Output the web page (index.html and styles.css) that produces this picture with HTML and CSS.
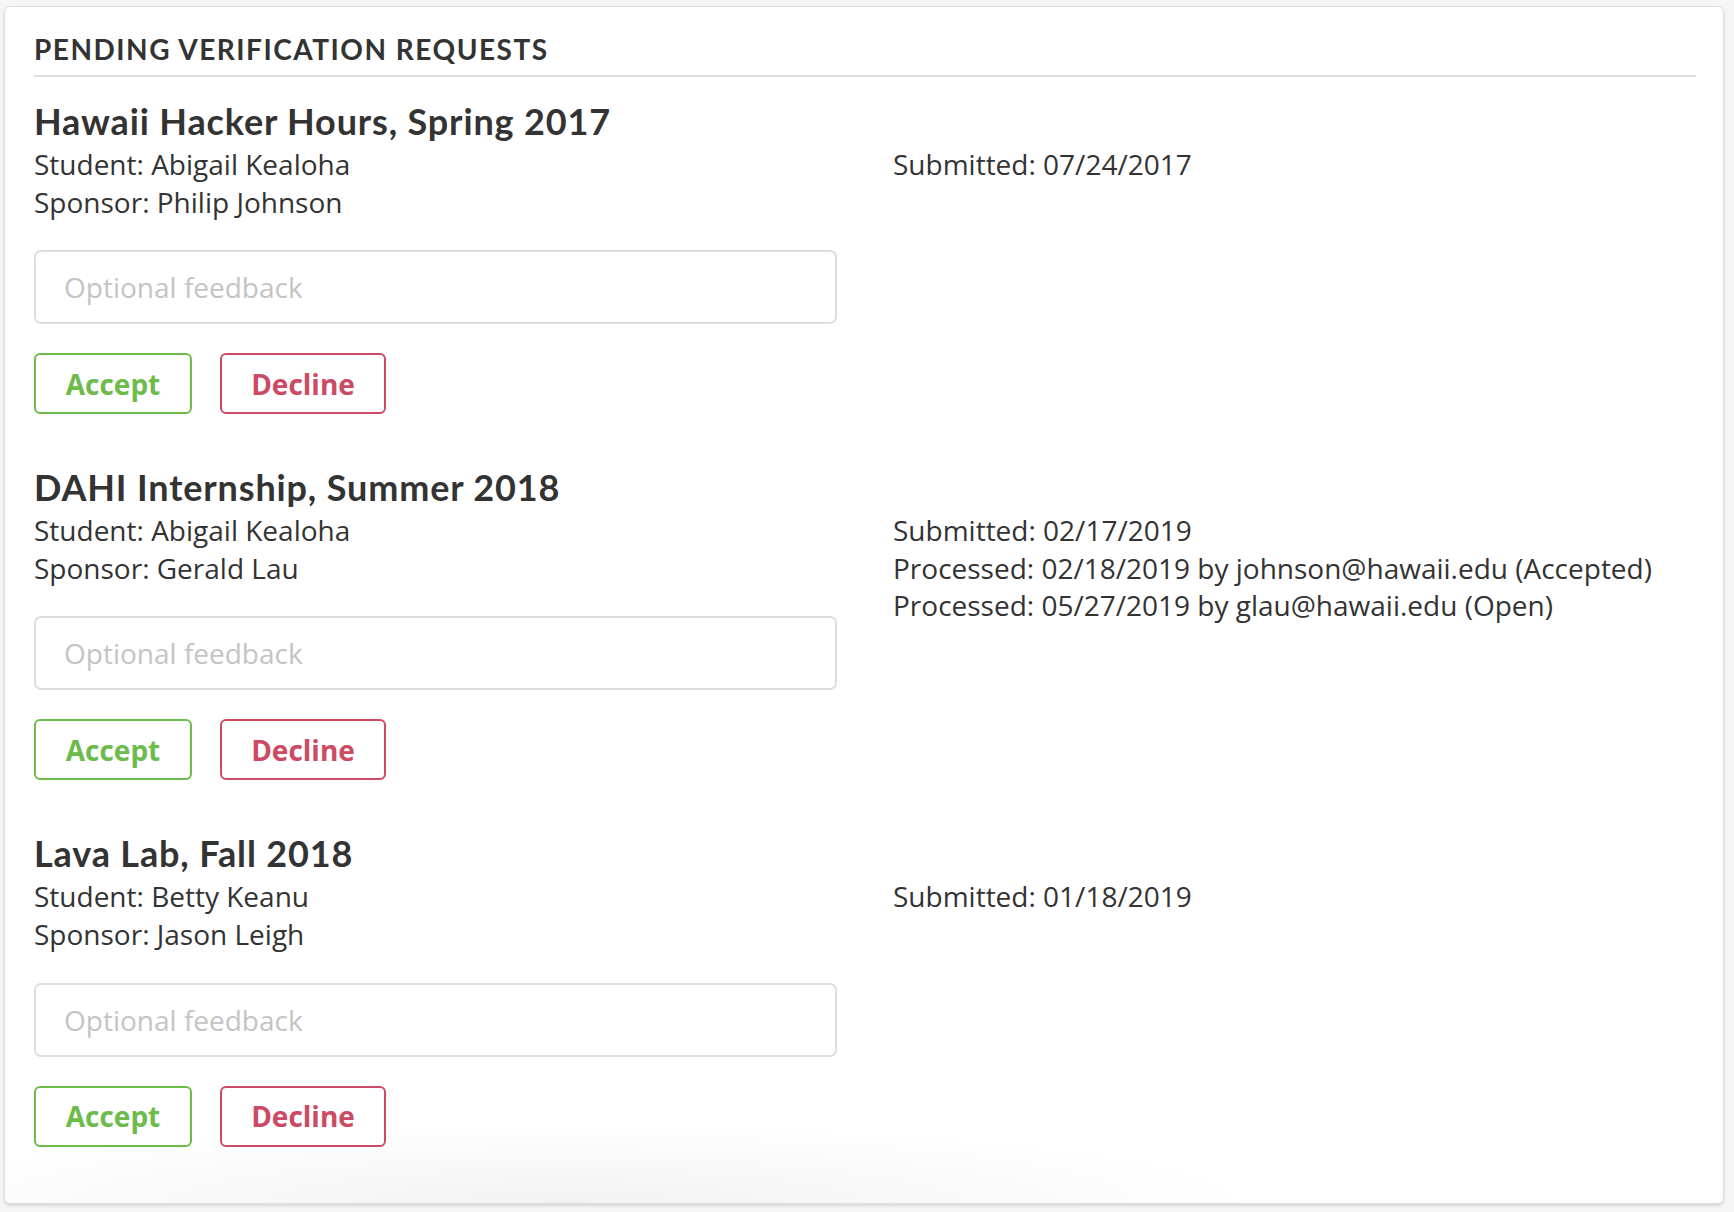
FILE: index.html
```html
<!DOCTYPE html>
<html lang="en">
<head>
<meta charset="utf-8">
<title>Pending Verification Requests</title>
<link rel="stylesheet" href="styles.css">
</head>
<body>
<div class="card">
  <h3 class="card-title">PENDING VERIFICATION REQUESTS</h3>

  <div class="request">
    <h2 class="request-title">Hawaii Hacker Hours, Spring 2017</h2>
    <div class="request-info">
      <div class="line">Student: Abigail Kealoha</div>
      <div class="line">Sponsor: Philip Johnson</div>
      <input class="feedback" type="text" placeholder="Optional feedback">
      <div class="actions">
        <button class="btn btn-accept">Accept</button>
        <button class="btn btn-decline">Decline</button>
      </div>
    </div>
    <div class="request-dates">
      <div class="line">Submitted: 07/24/2017</div>
    </div>
  </div>

  <div class="request">
    <h2 class="request-title">DAHI Internship, Summer 2018</h2>
    <div class="request-info">
      <div class="line">Student: Abigail Kealoha</div>
      <div class="line">Sponsor: Gerald Lau</div>
      <input class="feedback" type="text" placeholder="Optional feedback">
      <div class="actions">
        <button class="btn btn-accept">Accept</button>
        <button class="btn btn-decline">Decline</button>
      </div>
    </div>
    <div class="request-dates">
      <div class="line">Submitted: 02/17/2019</div>
      <div class="line">Processed: 02/18/2019 by johnson@hawaii.edu (Accepted)</div>
      <div class="line">Processed: 05/27/2019 by glau@hawaii.edu (Open)</div>
    </div>
  </div>

  <div class="request">
    <h2 class="request-title">Lava Lab, Fall 2018</h2>
    <div class="request-info">
      <div class="line">Student: Betty Keanu</div>
      <div class="line">Sponsor: Jason Leigh</div>
      <input class="feedback" type="text" placeholder="Optional feedback">
      <div class="actions">
        <button class="btn btn-accept">Accept</button>
        <button class="btn btn-decline">Decline</button>
      </div>
    </div>
    <div class="request-dates">
      <div class="line">Submitted: 01/18/2019</div>
    </div>
  </div>
</div>
</body>
</html>
```

FILE: styles.css
```css
html, body {
  margin: 0;
  background: #f5f5f5;
}

body {
  padding: 6px 10px 7px 4px;
  font-family: "Open Sans", "Noto Sans", sans-serif;
  color: #333333;
}

.card {
  background-color: #ffffff;
  background-image: radial-gradient(ellipse 700px 80px at 560px 100%, rgba(0, 0, 0, 0.05), rgba(0, 0, 0, 0));
  border: 1px solid #dedede;
  border-radius: 6px;
  box-shadow: 0 2px 3px rgba(0, 0, 0, 0.12);
  padding: 24px 27px 56px 29px;
}

.card-title {
  margin: 0;
  font-family: "Lato", "Open Sans", sans-serif;
  font-weight: 700;
  font-size: 28px;
  letter-spacing: 1.5px;
  line-height: 36px;
  color: #333333;
  padding-bottom: 8px;
  border-bottom: 2px solid #dddddd;
}

.request {
  display: grid;
  grid-template-columns: 1fr 1fr;
  column-gap: 56px;
  margin-top: 48px;
}

.card-title + .request {
  margin-top: 19px;
}

.request-title {
  grid-column: 1 / -1;
  margin: 0;
  font-family: "Lato", "Open Sans", sans-serif;
  font-weight: 700;
  font-size: 36px;
  letter-spacing: 0.85px;
  line-height: 50px;
  color: #333333;
}

.line {
  font-size: 28px;
  line-height: 37.6px;
}

.feedback {
  display: block;
  box-sizing: border-box;
  width: 100%;
  height: 74px;
  margin-top: 29px;
  padding: 0 28px;
  border: 2px solid #dedede;
  border-radius: 7px;
  font-family: "Open Sans", "Noto Sans", sans-serif;
  font-size: 28px;
  color: #333333;
  background: #ffffff;
  outline: none;
}

.feedback::placeholder {
  color: #c4c4c4;
}

.actions {
  display: flex;
  gap: 28px;
  margin-top: 29px;
}

.btn {
  box-sizing: border-box;
  height: 61px;
  padding: 0;
  background: #ffffff;
  border: 2px solid;
  border-radius: 6px;
  font-family: "Open Sans", "Noto Sans", sans-serif;
  font-weight: 700;
  font-size: 28px;
  cursor: pointer;
}

.btn-accept {
  width: 158px;
  color: #6cbb4b;
  border-color: #6cbb4b;
}

.btn-decline {
  width: 166px;
  color: #cc4a63;
  border-color: #cc4a63;
}
```
